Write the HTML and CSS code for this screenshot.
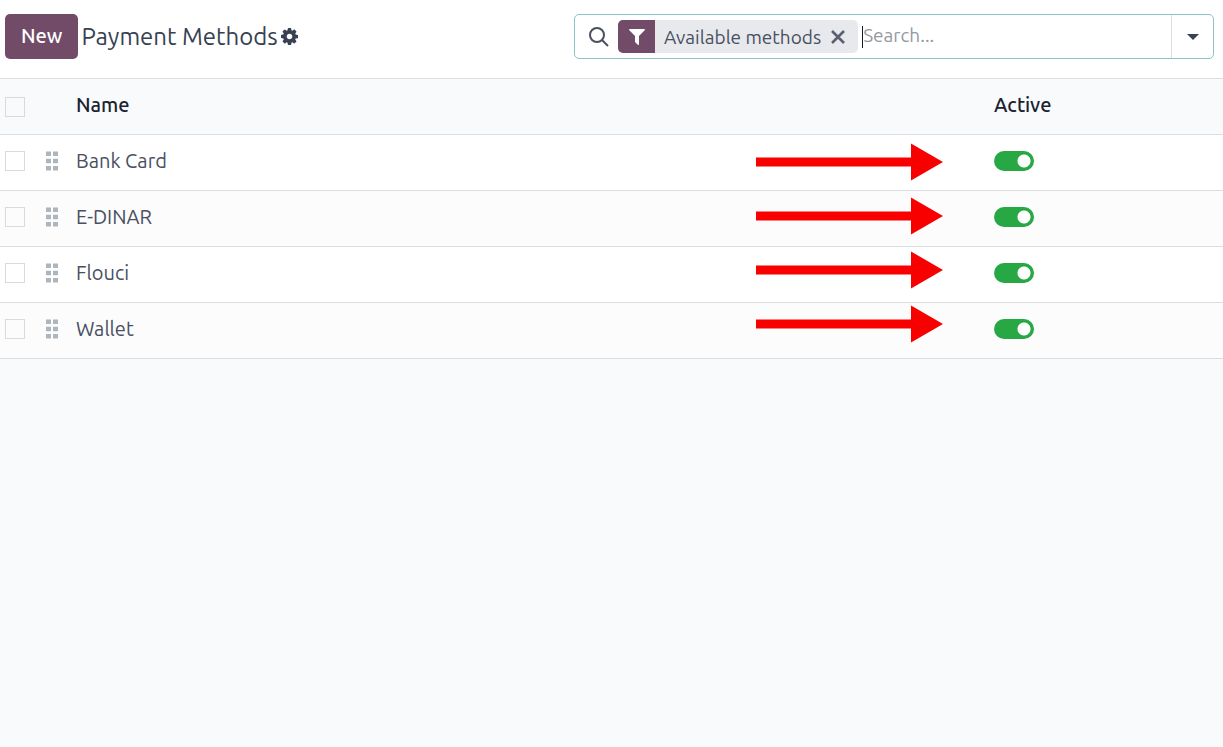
FILE: index.html
```html
<!DOCTYPE html>
<html lang="en">
<head>
<meta charset="utf-8">
<meta name="viewport" content="width=device-width, initial-scale=1">
<title>Payment Methods</title>
<link rel="stylesheet" href="styles.css">
</head>
<body>
<svg class="defs" width="0" height="0" aria-hidden="true">
  <symbol id="grip" viewBox="0 0 12 20">
    <path d="M0 .500h5v4.500H0zM7 .500h5v4.500H7zM0 7.700h5v4.500H0zM7 7.700h5v4.500H7zM0 15h5v4.500H0zM7 15h5v4.500H7z"/>
  </symbol>
  <symbol id="arrow" viewBox="0 0 188 38">
    <path d="M0 14.500H155V.500L187 19 155 37.500V23.500H0z"/>
  </symbol>
</svg>
<header class="control-panel">
  <div class="breadcrumb">
    <button class="btn-new" type="button">New</button>
    <h1 class="title">Payment Methods</h1>
    <button class="btn-icon" type="button" aria-label="Actions">
      <svg width="17" height="17" viewBox="0 0 1536 1536" fill="currentColor"><path d="M1024 768q0-106-75-181t-181-75-181 75-75 181 75 181 181 75 181-75 75-181zm512-109v222q0 12-8 23t-20 13l-185 28q-19 54-39 91 35 50 107 138 10 12 10 25t-9 23q-27 37-99 108t-94 71q-12 0-26-9l-138-108q-44 23-91 38-16 136-29 186-7 28-36 28H657q-14 0-24.500-8.500T621 1506l-28-184q-49-16-90-37l-141 107q-10 9-25 9-14 0-25-11-126-114-165-168-7-10-7-23 0-12 8-23 15-21 51-66.500t54-70.500q-27-50-41-99L29 913q-13-2-21-12.500T0 877V655q0-12 8-23t19-13l186-28q14-46 39-92-40-57-107-138-10-12-10-24 0-10 9-23 26-36 98.500-107.500T337 135q13 0 26 10l138 107q44-23 91-38 16-136 29-186 7-28 36-28h222q14 0 24.500 8.500T915 30l28 184q49 16 90 37l142-107q9-9 24-9 13 0 25 10 129 119 165 170 7 8 7 22 0 12-8 23-15 21-51 66.500t-54 70.500q26 50 41 98l183 28q13 2 21 12.500t8 23.500z"/></svg>
    </button>
  </div>
  <div class="search" role="search">
    <svg class="search-icon" width="20" height="20" viewBox="0 0 20 20" fill="none" stroke="currentColor" stroke-width="2"><circle cx="8" cy="8" r="7"/><path d="M13 13l6 6"/></svg>
    <div class="facet">
      <span class="facet-icon"><svg width="16" height="16" viewBox="0 0 16 16" fill="currentColor"><path d="M.600 0h14.800q.900.400.300 1.200L10 7v8.300q-.300.900-1.200.400L6 13V7L.300 1.200Q-.300.400.600 0z"/></svg></span>
      <span class="facet-label">Available methods</span>
      <button class="facet-remove" type="button" aria-label="Remove filter"><svg width="14" height="14" viewBox="0 0 14 14" stroke="currentColor" stroke-width="2.600"><path d="M1 1l12 12M13 1L1 13"/></svg></button>
    </div>
    <span class="caret"></span>
    <input class="search-input" type="text" placeholder="Search..." aria-label="Search">
    <button class="search-toggle" type="button" aria-label="Search options"><svg width="12" height="6" viewBox="0 0 12 6" fill="currentColor"><path d="M0 0h12L6 6z"/></svg></button>
  </div>
</header>
<main class="content">
  <table class="list">
    <thead>
      <tr><th class="col-check"><input class="check" type="checkbox" aria-label="Select all"></th><th class="col-grip"></th><th class="col-name">Name</th><th class="col-active">Active</th></tr>
    </thead>
    <tbody>
      <tr><td><input class="check" type="checkbox" aria-label="Select Bank Card"></td><td><svg class="grip" width="12" height="20"><use href="#grip"/></svg></td><td>Bank Card</td><td><input class="switch" type="checkbox" checked aria-label="Bank Card active"></td></tr>
      <tr><td><input class="check" type="checkbox" aria-label="Select E-DINAR"></td><td><svg class="grip" width="12" height="20"><use href="#grip"/></svg></td><td>E-DINAR</td><td><input class="switch" type="checkbox" checked aria-label="E-DINAR active"></td></tr>
      <tr><td><input class="check" type="checkbox" aria-label="Select Flouci"></td><td><svg class="grip" width="12" height="20"><use href="#grip"/></svg></td><td>Flouci</td><td><input class="switch" type="checkbox" checked aria-label="Flouci active"></td></tr>
      <tr><td><input class="check" type="checkbox" aria-label="Select Wallet"></td><td><svg class="grip" width="12" height="20"><use href="#grip"/></svg></td><td>Wallet</td><td><input class="switch" type="checkbox" checked aria-label="Wallet active"></td></tr>
    </tbody>
  </table>
  <div class="arrows" aria-hidden="true">
    <svg width="188" height="38"><use href="#arrow"/></svg>
    <svg width="188" height="38"><use href="#arrow"/></svg>
    <svg width="188" height="38"><use href="#arrow"/></svg>
    <svg width="188" height="38"><use href="#arrow"/></svg>
  </div>
</main>
</body>
</html>
```
FILE: styles.css
```css
* { box-sizing: border-box; }
body {
  margin: 0;
  min-height: 100vh;
  background: #f9fafc;
  color: #495061;
  font: 20px/24px Ubuntu, "Noto Sans", sans-serif;
}
button, input { font: inherit; color: inherit; margin: 0; padding: 0; }
button { border: 0; background: none; cursor: pointer; }
svg { display: block; }
.defs { position: absolute; }
.control-panel {
  display: flex;
  justify-content: space-between;
  align-items: center;
  gap: 24px;
  padding: 14px 9px 19px 5px;
  background: #fff;
  border-bottom: 1px solid #dadde1;
}
.breadcrumb { display: flex; align-items: center; gap: 3px; }
.btn-new {
  height: 45px;
  padding: 0 16px 2px;
  border-radius: 5px;
  background: #714b67;
  color: #fff;
  font-weight: 500;
}
.title { margin: 0; font-size: 24px; line-height: 32px; font-weight: 400; color: #374151; white-space: nowrap; }
.btn-icon { color: #374151; }
.search {
  display: flex;
  align-items: center;
  flex: 0 1 640px;
  height: 45px;
  border: 1px solid #8cc4c7;
  border-radius: 5px;
  background: #fff;
  font-size: 19px;
}
.search-icon { flex: none; margin: 0 9px 0 14px; color: #495061; }
.facet {
  display: flex;
  flex: none;
  align-items: center;
  height: 33px;
  border-radius: 5px;
  overflow: hidden;
  background: #e7e9ed;
}
.facet-icon { display: flex; align-items: center; justify-content: center; width: 37px; height: 100%; background: #714b67; color: #fff; }
.facet-label { padding: 0 10px 0 9px; }
.facet-remove { padding: 0 13px 0 0; color: #5b6070; }
.caret { width: 1px; height: 22px; margin-left: 4px; background: #111827; }
.search-input { flex: 1; min-width: 0; height: 32px; padding-bottom: 3px; border: 0; outline: 0; background: none; }
.search-input::placeholder { color: #9598a1; opacity: 1; }
.search-toggle { display: flex; align-items: center; justify-content: center; flex: none; width: 42px; height: 100%; border-left: 1px solid #dadde1; color: #374151; }
.content { position: relative; }
.list { width: 100%; table-layout: fixed; border-collapse: separate; border-spacing: 0; }
.list th, .list td { height: 56px; padding: 0 0 4px; border-bottom: 1px solid #dadde1; text-align: left; vertical-align: middle; }
.list th { color: #1b2230; font-weight: 500; }
.list tbody tr { background: #fff; }
.list tbody tr:nth-child(even) { background: #fcfcfc; }
.list .col-check { width: 46px; padding: 0 0 0 5px; }
.list td:first-child { padding-left: 5px; }
.list .col-grip { width: 30px; }
.list .col-active { width: 229px; }
.check { appearance: none; display: block; width: 20px; height: 20px; border: 1px solid #d8dadd; background: none; }
.grip { fill: #adb5bd; }
.switch {
  appearance: none;
  display: block;
  width: 40px;
  height: 20px;
  border-radius: 10px;
  background: radial-gradient(circle at 30px 10px, #fff 6px, #28a745 7px);
}
.arrows { position: absolute; top: 64px; right: 279px; display: grid; gap: 16px; fill: #f80000; }
```
